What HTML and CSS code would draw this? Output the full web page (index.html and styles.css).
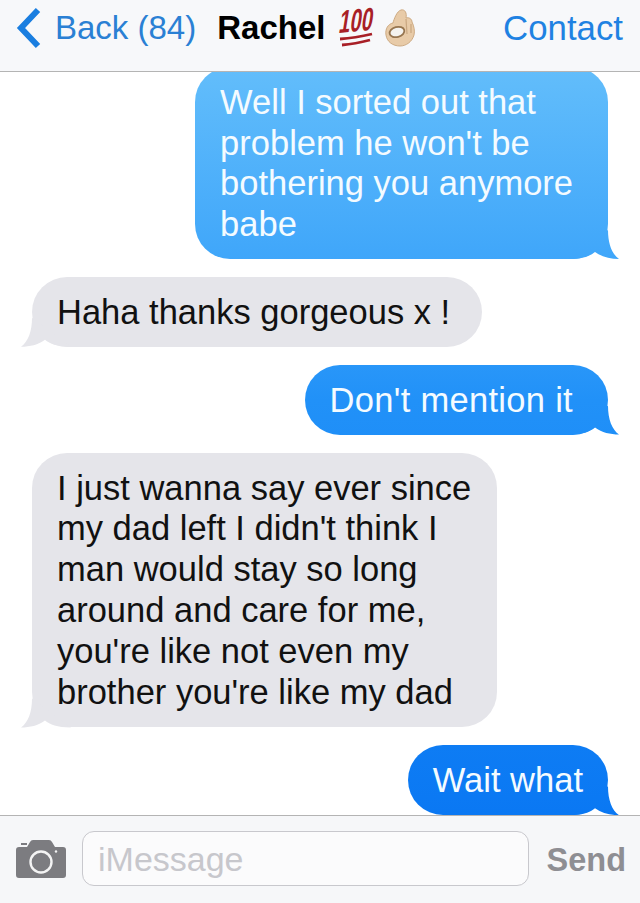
FILE: index.html
```html
<!DOCTYPE html>
<html lang="en">
<head>
    <meta charset="UTF-8">
    <meta name="viewport" content="width=device-width, initial-scale=1.0">
    <title>Rachel</title>
    <link rel="stylesheet" href="styles.css">
</head>
<body>
    <div class="phone">
        <div class="nav">
            <svg class="chevron" width="26" height="42" viewBox="0 0 26 42">
                <path d="M22 3 L5 21 L22 39" fill="none" stroke="#1a7ee0" stroke-width="6"/>
            </svg>
            <span class="back">Back (84)</span>
            <span class="name">Rachel</span>
            <svg class="emoji-100" width="38" height="52" viewBox="0 -6 38 52">
                <text transform="translate(1 25) rotate(-5) skewX(-14) scale(0.92 1.45)" font-family="Liberation Sans, sans-serif" font-weight="bold" font-size="22" fill="#a81f26">100</text>
                <path d="M3 31 Q18 30 35 26 M5 37 Q18 36 33 32" stroke="#a81f26" stroke-width="2.8" fill="none"/>
            </svg>
            <svg class="emoji-ok" width="30" height="38" viewBox="0 0 30 38">
                <path d="M16 1 C20 0 22 4 21 9 C24 8 27 10 27 13 C29 17 30 22 29 26 C27 33 21 37 15 37 C8 37 2 33 1 26 C0 20 3 15 8 14 C9 10 12 2 16 1 Z" fill="#e8cba8" stroke="#cdaa82" stroke-width="1"/>
                <ellipse cx="12" cy="23" rx="7.5" ry="5" transform="rotate(-15 12 23)" fill="#f4f2ee" stroke="#96754f" stroke-width="1.8"/>
                <path d="M21 10 L22 25 M26 15 L26 24" stroke="#c9a780" stroke-width="1.2" fill="none"/>
            </svg>
            <span class="contact">Contact</span>
        </div>

        <div class="messages">
            <div class="bubble out first">Well I sorted out that<br>problem he won't be<br>bothering you anymore<br>babe</div>
            <div class="bubble in thanks">Haha thanks gorgeous x !</div>
            <div class="bubble out mention">Don't mention it</div>
            <div class="bubble in tall">I just wanna say ever since<br>my dad left I didn't think I<br>man would stay so long<br>around and care for me,<br>you're like not even my<br>brother you're like my dad</div>
            <div class="bubble out short">Wait what</div>
        </div>

        <div class="input-bar">
            <svg class="camera" width="50" height="38" viewBox="0 0 50 38">
                <path d="M3 7 H11 L14 2 Q15 0 17 0 H33 Q35 0 36 2 L39 7 H47 Q50 7 50 10 V35 Q50 38 47 38 H3 Q0 38 0 35 V10 Q0 7 3 7 Z" fill="#7c7c80"/>
                <rect x="5" y="3" width="6" height="2" fill="#7c7c80"/>
                <circle cx="25" cy="22" r="10.5" fill="none" stroke="#f4f4f4" stroke-width="2.4"/>
                <circle cx="40" cy="11.5" r="1.2" fill="#f4f4f4"/>
            </svg>
            <div class="input">iMessage</div>
            <span class="send">Send</span>
        </div>
    </div>
</body>
</html>
```

FILE: styles.css
```css
body {
    font-family: "Liberation Sans", Arial, sans-serif;
    margin: 0;
    padding: 0;
    background-color: #fff;
}
.phone {
    width: 640px;
    height: 903px;
    display: flex;
    flex-direction: column;
    overflow: hidden;
}
.nav {
    height: 55px;
    display: flex;
    align-items: center;
    padding: 0 17px 16px 16px;
    background-color: #f7f8fa;
    border-bottom: 1px solid #b4b4b4;
    font-size: 33px;
    flex-shrink: 0;
}
.back {
    margin-left: 13px;
    color: #2a80d4;
}
.name {
    margin-left: 21px;
    font-weight: bold;
    color: #000;
}
.emoji-100 {
    margin-left: 12px;
}
.emoji-ok {
    margin-left: 10px;
}
.contact {
    margin-left: auto;
    font-size: 34.8px;
    color: #1f82e2;
}
.messages {
    flex: 1;
    min-height: 0;
    overflow: hidden;
    display: flex;
    flex-direction: column;
    gap: 18px;
    padding: 0 32px;
}
.bubble {
    position: relative;
    flex-shrink: 0;
    padding: 15px 35px 14px 25px;
    border-radius: 35px;
    font-size: 34.5px;
    line-height: 40.8px;
    white-space: nowrap;
}
.bubble::after {
    content: "";
    position: absolute;
    bottom: -1px;
    width: 50px;
    height: 30px;
    clip-path: path("M39 0 C39 14 43 24 50 29 C41 29 33 27 26 22 C21 26 14 29 0 29 Z");
}
.out {
    align-self: flex-end;
    color: #f4fbff;
    background: linear-gradient(180deg, #62bdfb 70px, #3fa6fa 260px, #2191f8 400px, #0a78f3 815px) fixed;
}
.out::after {
    right: -11px;
    background: inherit;
}
.in {
    align-self: flex-start;
    color: #111;
    background-color: #e5e5ea;
}
.in::after {
    left: -11px;
    background-color: #e5e5ea;
    transform: scaleX(-1);
}
.first {
    margin-top: -5.2px;
}
.thanks {
    padding-right: 32px;
}
.mention {
    letter-spacing: 0.3px;
}
.tall {
    padding-right: 26px;
    padding-bottom: 15px;
}
.short {
    padding-right: 25px;
}
.input-bar {
    height: 85px;
    display: flex;
    align-items: center;
    padding: 0 14px 2px 16px;
    background-color: #f6f7f9;
    border-top: 1px solid #b4b4b4;
    flex-shrink: 0;
}
.input {
    flex: 1;
    height: 53px;
    margin-left: 16px;
    padding-left: 15px;
    line-height: 54px;
    font-size: 34px;
    color: #c7c7cc;
    background-color: #fbfbfc;
    border: 1px solid #c8c8cd;
    border-radius: 12px;
}
.send {
    margin-left: 18px;
    margin-top: 3px;
    font-size: 32.5px;
    font-weight: bold;
    color: #8e8e93;
}
```
